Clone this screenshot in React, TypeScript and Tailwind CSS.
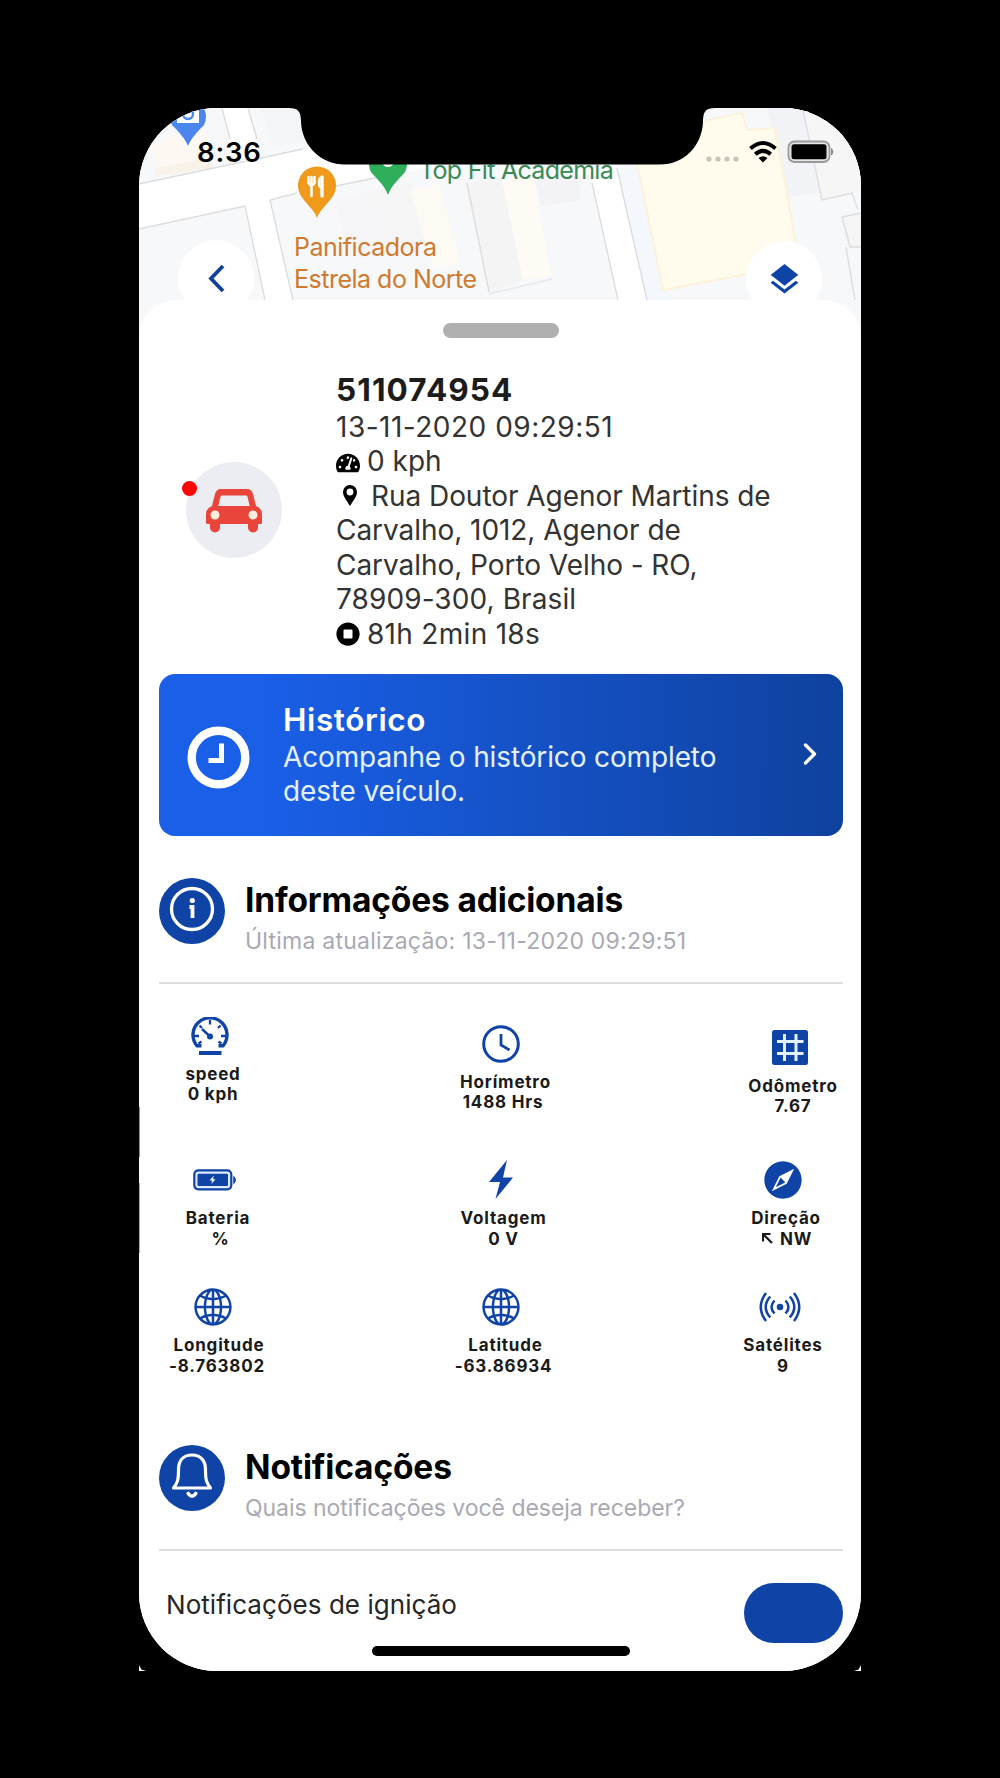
import type { ReactNode } from 'react';
import { FaTachometerAlt, FaStopCircle } from 'react-icons/fa';
import { MdLayers } from 'react-icons/md';
import { IoIosCompass, IoIosGlobe } from 'react-icons/io';

function MapBackground() {
  return (
    <svg className="absolute left-0 top-0" width="722" height="240" viewBox="0 0 722 240">
      <rect width="722" height="240" fill="#f7f8fa" />
      <polygon points="10,36 62,18 78,50 22,66" fill="#fdf9f2" />
      <polygon points="16,60 70,50 74,60 16,68" fill="#f8f2e8" />
      <polygon points="122,0 164,0 164,34 134,38" fill="#f4f5f7" />
      <polygon points="196,92 236,82 250,146 212,152" fill="#f5f5f7" />
      <polygon points="236,82 272,74 290,134 250,142" fill="#f5f5f5" />
      <polygon points="271,82 300,76 322,156 294,160" fill="#fdfaf3" />
      <polygon points="326,75 363,70 384,172 350,186" fill="#f4f4f5" />
      <polygon points="363,72 394,68 412,168 384,172" fill="#fdfbf4" />
      <polygon points="396,72 440,66 441,92 402,98" fill="#f3f3f5" />
      <polygon points="480,64 499,60 524,182 540,192 508,192" fill="#f4f7fb" />
      <polygon points="628,0 664,0 683,84 648,90" fill="#f2f3f6" />
      <polygon points="666,0 722,0 722,84 683,92" fill="#f6f6f6" />
      <polygon points="703,109 722,105 722,139 711,139" fill="#f5f5f5" />
      <g fill="#fff">
        <polygon points="0,76 164,41 480,-8 480,28 250,67 131,92 106,98 0,121" />
        <polygon points="83,0 109,0 154,192 126,192" />
        <polygon points="453,75 446,46 474,46 508,192 479,192" />
      </g>
      <polygon
        points="560,14 603,5 608,22 636,20 658,142 640,160 524,182 497,50"
        fill="#fffcee"
        stroke="#fcf2da"
        strokeWidth="2"
      />
      <g fill="none" stroke="#dcdddf" strokeWidth="1.400">
        <path d="M0 76 164 41M0 121 106 98 126 192M131 92 154 192M131 92 158 85M197 78 250 67M83 0 91 31M109 0 118 31" />
        <path d="M453 75 479 192M478 60 508 192M328 75 350 184" />
        <path d="M350 186 413 171" stroke="#e8e8ea" />
        <path d="M664 2 683 92 713 85 719 102M722 105 703 109 711 139 722 139M707 139 716 192" />
      </g>
      <path d="M49 38C46 30 38 22 33 17A18 18 0 1 1 65 17C60 22 52 30 49 38Z" fill="#4a86ee" />
      <path d="M38 0h22v15H38z" fill="#fff" />
      <circle cx="49" cy="6" r="5" fill="none" stroke="#4a86ee" strokeWidth="2.400" />
      <path
        d="M178 110C175 101 166 95 161.500 87A19 19 0 1 1 194.500 87C190 95 181 101 178 110Z"
        fill="#f09a1c"
      />
      <g stroke="#fff" fill="none" strokeLinecap="round">
        <path d="M169.500 69v6q3 5 6 0v-6M172.500 69v19" strokeWidth="2.500" />
        <path d="M183 69v19" strokeWidth="3.400" />
        <path d="M181 70q-2 6 0 9" strokeWidth="2.500" />
      </g>
      <path d="M249 87C246 78 238 71 232 64A19 19 0 1 1 266 64C260 71 252 78 249 87Z" fill="#2fae5b" />
      <path d="M243 55h12q-2 4-6 4t-6-4z" fill="#fff" />
    </svg>
  );
}

function StatusBar() {
  return (
    <>
      <svg className="absolute left-0 top-0" width="722" height="60" viewBox="0 0 722 60">
        <path d="M150-2V0C159 0 162 3 162 14C163 38 182 56.500 206 56.500H521C545 56.500 563 38 564 14C564 3 567 0 576 0V-2Z" fill="#000" />
        <g fill="#c6c3b8">
          <circle cx="570" cy="51" r="2.600" />
          <circle cx="579" cy="51" r="2.600" />
          <circle cx="588" cy="51" r="2.600" />
          <circle cx="597" cy="51" r="2.600" />
        </g>
        <g fill="none" stroke="#000" strokeWidth="4">
          <path d="M611.500 40.500Q624 29.500 636.500 40.500" />
          <path d="M616.300 46.300Q624 39.500 631.700 46.300" />
        </g>
        <path d="M619.500 50Q624 46.500 628.500 50L624 54.500Z" />
        <rect x="649.500" y="33.500" width="41" height="20.500" rx="6" fill="#e6e6e6" stroke="#9a9a9a" strokeWidth="1.800" />
        <rect x="652.500" y="36.300" width="35" height="15" rx="2.500" />
        <path d="M692.500 40.500q3 3.300 0 6.600z" fill="#8c8c8c" stroke="#8c8c8c" />
      </svg>
      <span className="absolute left-[58px] top-[26px] text-[27.5px] leading-[36px] font-semibold tracking-[0.8px] text-black">
        8:36
      </span>
    </>
  );
}

function CarIcon() {
  return (
    <svg width="56" height="44" viewBox="0 0 56 44" fill="#e9453a">
      <path
        fillRule="evenodd"
        d="M15 0H41C44.500 0 46.200 2 47 5L50 17Q56 19.500 56 25V33.500Q56 35 54.500 35H52V38.500A5 5 0 0 1 42 38.500V35H14V38.500A5 5 0 0 1 4 38.500V35H1.500Q0 35 0 33.500V25Q0 19.500 6 17L9 5C9.800 2 11.500 0 15 0ZM16 6.500Q14.800 6.500 14.500 7.700L12.300 17H43.700L41.500 7.700Q41.200 6.500 40 6.500Z"
      />
      <circle cx="9" cy="26" r="4.500" fill="#fdeedd" />
      <circle cx="47" cy="26" r="4.500" fill="#fdeedd" />
    </svg>
  );
}

function PinIcon() {
  return (
    <svg className="mr-[14px] ml-[7px]" width="14" height="21" viewBox="0 0 14 21">
      <path
        fillRule="evenodd"
        d="M7 0A7 7 0 0 1 14 7C14 11.500 10 16 7 21C4 16 0 11.500 0 7A7 7 0 0 1 7 0ZM7 3.600A3.400 3.400 0 1 0 7 10.400A3.400 3.400 0 1 0 7 3.600Z"
      />
    </svg>
  );
}

function VehicleSummary() {
  return (
    <div className="mt-[33px] flex pl-[27px]">
      <div className="relative mt-[91px] flex size-[96px] items-center justify-center rounded-full bg-[#ecedf2] pt-[2px]">
        <CarIcon />
        <span className="absolute -left-1 top-[19px] size-[15px] rounded-full bg-[#fb0505]" />
      </div>
      <div className="ml-[54px] text-[28px] leading-[34.5px] whitespace-nowrap text-[#333]">
        <h1 className="mb-[1.5px] h-[37px] text-[31.5px] leading-[37px] font-bold tracking-[1.1px] text-[#1c1c1c]">511074954</h1>
        <p className="tracking-[0.5px]">13-11-2020 09:29:51</p>
        <p className="flex items-center">
          <FaTachometerAlt className="mt-1 mr-[7px] size-[24px] text-black" />0 kph
        </p>
        <p className="flex items-center tracking-[-0.05px]">
          <PinIcon />
          Rua Doutor Agenor Martins de
        </p>
        <p className="tracking-[-0.05px]">Carvalho, 1012, Agenor de</p>
        <p className="tracking-[-0.05px]">Carvalho, Porto Velho - RO,</p>
        <p className="tracking-[0.1px]">78909-300, Brasil</p>
        <p className="flex items-center tracking-[0.3px]">
          <FaStopCircle className="mr-[7px] size-[24px] text-black" />
          81h 2min 18s
        </p>
      </div>
    </div>
  );
}

function HistoryCard() {
  return (
    <button className="mt-[22.5px] flex h-[162px] w-full items-center rounded-[16px] bg-linear-to-r from-[#1a5fe8] from-15% to-[#0f429f] pr-[26px] pl-[28px] text-left text-white">
      <svg className="mt-[5px] shrink-0" width="63" height="63" viewBox="0 0 63 63" fill="none" stroke="#fff">
        <circle cx="31.500" cy="31.500" r="26.800" strokeWidth="8.400" />
        <path d="M34.500 17.500V34.500H21.500" strokeWidth="5" />
      </svg>
      <div className="ml-[33px] grow pt-px text-[28px] leading-[34.500px] whitespace-nowrap text-[#e4f0ff]">
        <h2 className="text-[31.5px] leading-[37px] font-semibold tracking-[0.6px] text-white">Histórico</h2>
        <p className="mt-[1.5px] tracking-[-0.13px]">
          Acompanhe o histórico completo
          <br />
          deste veículo.
        </p>
      </div>
      <svg className="-mt-[2px] shrink-0" width="14" height="22" viewBox="0 0 14 22" fill="none" stroke="#fff" strokeWidth="3.300" strokeLinecap="round" strokeLinejoin="round">
        <path d="M2.500 2 11.500 11 2.500 20" />
      </svg>
    </button>
  );
}

function SectionHeader({ icon, title, children }: { icon: ReactNode; title: string; children: ReactNode }) {
  return (
    <div className="flex h-[106px] border-b-2 border-[#dedee0]">
      <div className="flex size-[66px] items-center justify-center rounded-full bg-[#0f43a5] text-white">{icon}</div>
      <div className="ml-[20px] whitespace-nowrap">
        <h2 className="text-[33.5px] leading-[44px] font-bold tracking-[-0.15px] text-black">{title}</h2>
        {children}
      </div>
    </div>
  );
}

function InfoIcon() {
  return (
    <svg className="-mt-[3px]" width="46" height="46" viewBox="0 0 46 46" fill="none" stroke="#fff">
      <circle cx="23" cy="23" r="20.500" strokeWidth="3.300" />
      <circle cx="23.300" cy="14.500" r="2.600" fill="#fff" stroke="none" />
      <path d="M20.500 21H23.500V32" strokeWidth="3.800" />
    </svg>
  );
}

function BellIcon() {
  return (
    <svg className="-mt-[4px]" width="42" height="46" viewBox="0 0 42 46" fill="none" stroke="#fff" strokeLinejoin="round">
      <path
        d="M21 2C11 2 7.500 9 7.500 17C7.500 27 6.500 30 2.500 35H39.500C35.500 30 34.500 27 34.500 17C34.500 9 31 2 21 2Z"
        strokeWidth="3.200"
      />
      <path d="M17.200 40.500Q21 46 24.800 40.500" strokeWidth="3.600" strokeLinecap="round" />
    </svg>
  );
}

function GaugeIcon() {
  return (
    <svg width="38" height="38" viewBox="0 0 38 38" fill="none" stroke="currentColor">
      <path d="M10.500 28.800H6A17 17 0 1 1 32 28.800H27.500" strokeWidth="3.400" strokeLinejoin="round" />
      <path d="M19 3V7.500M8.500 8.500 11 11M29.500 8.500 27 11M3 19H8M35 19H30M7.500 26.500 10.500 24.500M30.500 26.500 27.500 24.500" strokeWidth="2.300" />
      <path d="M11 12 19 19.500" strokeWidth="2.400" />
      <circle cx="19" cy="19.500" r="3" fill="currentColor" stroke="none" />
      <path d="M8 36H30.500" strokeWidth="4" />
    </svg>
  );
}

function ClockIcon() {
  return (
    <svg width="38" height="38" viewBox="0 0 38 38" fill="none" stroke="currentColor" strokeWidth="3">
      <circle cx="19" cy="19" r="17.300" />
      <path d="M19 9V20L27.500 25" strokeWidth="2.800" />
    </svg>
  );
}

function GridIcon() {
  return (
    <svg width="36" height="35" viewBox="0 0 36 35">
      <rect width="36" height="35" rx="2.500" fill="currentColor" />
      <path d="M12.500 4V31M24 4V31M5 11.500H31.500M5 23.500H31.500" stroke="#e3f1ff" strokeWidth="3" />
    </svg>
  );
}

function BatteryIcon() {
  return (
    <svg width="44" height="22" viewBox="0 0 44 22">
      <rect x="1.300" y="1.300" width="37" height="19" rx="4" fill="#dcebff" stroke="currentColor" strokeWidth="2.200" />
      <rect x="4.500" y="4.700" width="30.500" height="12.300" rx="1" fill="currentColor" />
      <path d="M20.800 6.500 16.500 11.500H19L18.500 15 22.500 10.200H20.200Z" fill="#e6f2ff" />
      <path d="M40.800 7.500Q44 11 40.800 14.500Z" fill="currentColor" stroke="currentColor" />
    </svg>
  );
}

function BoltIcon() {
  return (
    <svg width="26" height="39" viewBox="0 0 26 39" fill="currentColor">
      <path d="M19 0 1 22H12L7.500 39 25 17.500H15Z" />
    </svg>
  );
}

function SignalIcon() {
  return (
    <svg width="42" height="30" viewBox="0 0 42 30" fill="none" stroke="currentColor" strokeWidth="2.500">
      <circle cx="21" cy="15" r="3.300" fill="currentColor" stroke="none" />
      <path d="M15.500 8.500Q9.500 15 15.500 21.500M26.500 8.500Q32.500 15 26.500 21.500" />
      <path d="M11.200 4.500Q2.200 15 11.200 25.500M30.800 4.500Q39.800 15 30.800 25.500" />
      <path d="M7 1Q-3.500 15 7 29M35 1Q45.500 15 35 29" />
    </svg>
  );
}

function Metric({ icon, label, value, iconClass = '', labelClass = '', valueClass = '', className = '' }: {
  icon: ReactNode;
  label: string;
  value: ReactNode;
  iconClass?: string;
  labelClass?: string;
  valueClass?: string;
  className?: string;
}) {
  return (
    <div className={`flex flex-col items-center text-[17px] leading-[20.5px] font-bold tracking-[0.8px] whitespace-nowrap text-[#1a1a1a] ${className}`}>
      <div className={`mb-2 flex h-[38px] items-center text-[#0f43a5] ${iconClass}`}>{icon}</div>
      <p className={labelClass}>{label}</p>
      <p className={valueClass}>{value}</p>
    </div>
  );
}

function Metrics() {
  return (
    <div className="grid h-[427px] grid-cols-[116px_1fr_116px] grid-rows-[145px_127px_1fr]">
      <Metric className="pt-[33px]" icon={<GaugeIcon />} label="speed" value="0 kph" iconClass="pr-[14px]" labelClass="pr-[8px] pt-px" valueClass="pr-[8px]" />
      <Metric className="pt-[41px]" icon={<ClockIcon />} label="Horímetro" value="1488 Hrs" iconClass="pr-px" labelClass="pl-[9px] pt-px" valueClass="pl-[4px]" />
      <Metric className="pt-[45px]" icon={<GridIcon />} label="Odômetro" value="7.67" iconClass="pl-[10px]" labelClass="pl-[16px] pt-px" valueClass="pl-[16px]" />
      <Metric className="pt-[32px]" icon={<BatteryIcon />} label="Bateria" value="%" iconClass="pr-[4px]" labelClass="pl-[2px] pt-[1.5px]" valueClass="pl-[7px]" />
      <Metric className="pt-[32px]" icon={<BoltIcon />} label="Voltagem" value="0 V" iconClass="pr-px" labelClass="pl-[5px] pt-[1.5px]" valueClass="pl-[5px]" />
      <Metric
        className="pt-[32px]"
        icon={<IoIosCompass className="size-[46px]" />}
        label="Direção"
        value={
          <span className="flex items-center gap-[7px]">
            <svg width="11" height="11" viewBox="0 0 11 11" fill="none" stroke="currentColor" strokeWidth="2.200">
              <path d="M1 8.500V1H8.500M1 1 10 10" />
            </svg>
            NW
          </span>
        }
        iconClass="pr-[4px]"
        labelClass="pl-[2px] pt-[1.5px]"
        valueClass="pl-[4px]"
      />
      <Metric className="pt-[32px]" icon={<IoIosGlobe className="size-[46px]" />} label="Longitude" value="-8.763802" iconClass="pr-[8px]" labelClass="pl-[4px] pt-[1.5px]" />
      <Metric className="pt-[32px]" icon={<IoIosGlobe className="size-[46px]" />} label="Latitude" value="-63.86934" iconClass="pr-px" labelClass="pl-[9px] pt-[1.5px]" valueClass="pl-[5px]" />
      <Metric className="pt-[32px]" icon={<SignalIcon />} label="Satélites" value="9" iconClass="pr-[10px]" labelClass="pr-[4px] pt-[1.5px]" valueClass="pr-[4px]" />
    </div>
  );
}

export default function App() {
  return (
    <div className="flex h-[1778px] w-[1000px] bg-black pt-[108px] pl-[139px] font-['Inter','Liberation_Sans',sans-serif]">
      <div className="relative h-[1563px] w-[722px]">
        <span className="absolute bottom-0 left-0 h-[6px] w-[7px] bg-white [clip-path:polygon(0_0,35%_75%,100%_100%,0_100%)]" />
        <span className="absolute right-0 bottom-0 h-[6px] w-[7px] bg-white [clip-path:polygon(100%_0,65%_75%,0_100%,100%_100%)]" />
        <div className="relative flex h-full flex-col overflow-hidden rounded-[78px] bg-white">
          <MapBackground />
          <span className="absolute top-[47px] left-[280px] text-[25px] leading-[30px] tracking-[-0.7px] whitespace-nowrap text-[#3a8a55]">
            Top Fit Academia
          </span>
          <p className="absolute top-[123px] left-[155px] text-[25px] leading-[32px] tracking-[-0.5px] whitespace-nowrap text-[#d07a30]">
            Panificadora
            <br />
            Estrela do Norte
          </p>
          <button className="absolute top-[132px] left-[39px] flex size-[76px] items-center justify-center rounded-full bg-white">
            <svg width="17" height="28" viewBox="0 0 17 28" fill="none" stroke="#123f98" strokeWidth="3.800">
              <path d="M15 2 3 14.500 15 27" />
            </svg>
          </button>
          <button className="absolute top-[133px] left-[607px] flex size-[76px] items-center justify-center rounded-full bg-white">
            <MdLayers className="size-[37px] text-[#0f43a5]" />
          </button>
          <StatusBar />
          <main className="relative mt-[192px] flex grow flex-col rounded-t-[38px] bg-white px-[20px] pr-[18px] pt-[23px]">
            <div className="h-[15px] w-[116px] self-center rounded-full bg-[#b0b0b0]" />
            <VehicleSummary />
            <HistoryCard />
            <div className="mt-[42px]">
              <SectionHeader title="Informações adicionais" icon={<InfoIcon />}>
                <p className="text-[23px] leading-[38px] tracking-[0.23px] text-[#a9a9b4]">Última atualização: 13-11-2020 09:29:51</p>
              </SectionHeader>
            </div>
            <Metrics />
            <div className="mt-[34px]">
              <SectionHeader title="Notificações" icon={<BellIcon />}>
                <p className="text-[23px] leading-[38px] tracking-[-0.04px] text-[#a9a9b4]">Quais notificações você deseja receber?</p>
              </SectionHeader>
            </div>
            <div className="flex items-start justify-between pt-[32px] pl-[7px]">
              <span className="mt-[5px] text-[26px] leading-[34px] tracking-[0.05px] text-[#262626]">Notificações de ignição</span>
              <span className="h-[60px] w-[99px] rounded-full bg-[#0f43a5]" />
            </div>
          </main>
          <span className="absolute bottom-[15px] left-[233px] h-[10px] w-[258px] rounded-full bg-black" />
        </div>
        <span className="absolute top-[999px] left-0 h-[50px] w-px bg-[#c98a2c]" />
        <span className="absolute top-[1075px] left-0 h-[70px] w-px bg-[#c9a48a]" />
      </div>
    </div>
  );
}
